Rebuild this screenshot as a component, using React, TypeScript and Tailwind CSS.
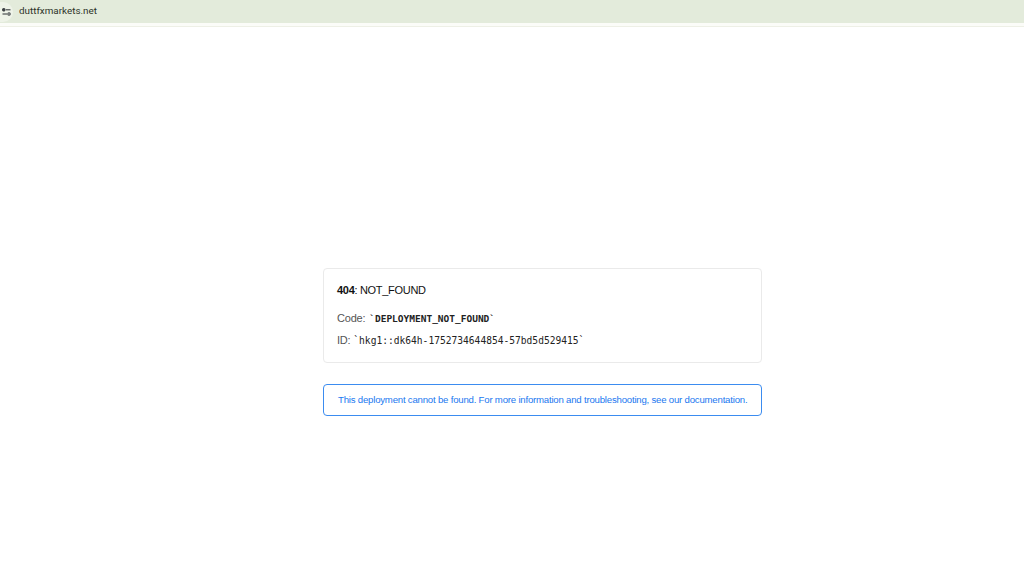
import React from 'react';

export default function App() {
  return (
    <div className="h-[577px] w-[1024px] overflow-hidden bg-white font-['Liberation_Sans',Arial,sans-serif]">
      {/* address bar */}
      <div className="flex h-[23px] items-center bg-[#e3ebdb]">
        <div className="flex h-[20px] w-[13px] items-center justify-center rounded-r-full bg-[#eef3e8]">
          <svg width="9" height="8" viewBox="0 0 9 8" fill="none" stroke="#3c4043" strokeWidth="1.1">
            <circle cx="1.8" cy="1.8" r="1.2" fill="#3c4043" />
            <path d="M4 1.8H8.5" />
            <circle cx="7" cy="6" r="1.2" />
            <path d="M0.5 6H5" />
          </svg>
        </div>
        <span className="ml-[6px] font-['Roboto',sans-serif] text-[9.85px] text-[#2c3328]">duttfxmarkets.net</span>
      </div>
      <div className="h-[4px] border-b border-[#eef0e6] bg-[#fbfcf8]" />

      <main className="flex flex-col items-center pt-[241px] pl-[61px]">
        <div className="h-[95px] w-[439px] rounded-[4px] border border-[#eaeaea] px-[13px] pt-[14px]">
          <p className="text-[11px] leading-[15px] tracking-[-0.3px] text-[#111]">
            <strong>404</strong>: NOT_FOUND
          </p>
          <p className="mt-[13px] text-[11px] leading-[15px] tracking-[-0.2px] text-[#555]">
            Code: <code className="ml-[1px] font-['DejaVu_Sans_Mono',monospace] text-[9.5px] font-semibold tracking-normal text-[#222]">`DEPLOYMENT_NOT_FOUND`</code>
          </p>
          <p className="mt-[7px] text-[11px] leading-[15px] tracking-[-0.2px] text-[#555]">
            ID: <code className="font-['DejaVu_Sans_Mono',monospace] text-[9.6px] tracking-normal text-[#222]">`hkg1::dk64h-1752734644854-57bd5d529415`</code>
          </p>
        </div>
        <div className="mt-[21px] flex h-[32px] w-[439px] items-center rounded-[4px] border border-[#3b8cf0] px-[14px]">
          <p className="mt-[1px] whitespace-nowrap text-[9.6px] tracking-[-0.2px] text-[#1a78f0]">
            This deployment cannot be found. For more information and troubleshooting, see our documentation.
          </p>
        </div>
      </main>
    </div>
  );
}
